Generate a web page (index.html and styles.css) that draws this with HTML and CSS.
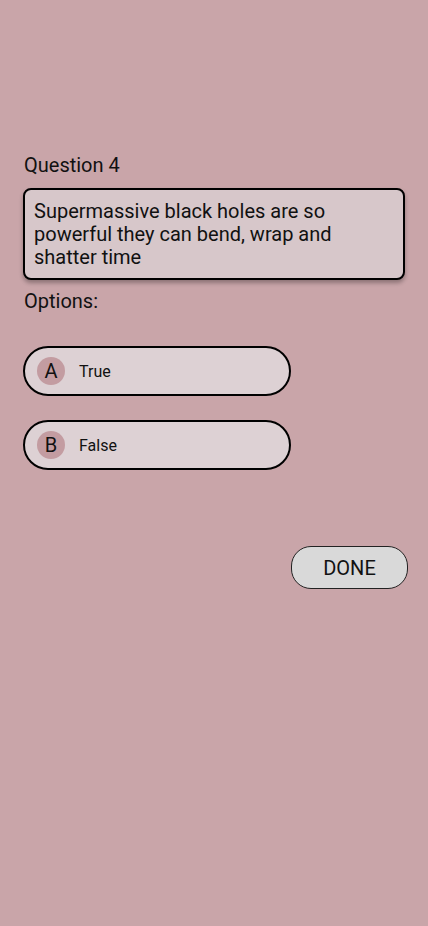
FILE: index.html
```html
<!DOCTYPE html>
<html>
<head>
<meta charset="utf-8">
<link rel="stylesheet" href="styles.css">
</head>
<body>
<main class="page">
  <div class="q-label">Question 4</div>
  <div class="q-box">Supermassive black holes are so powerful they can bend, wrap and shatter time</div>
  <div class="opt-label">Options:</div>
  <div class="options">
    <div class="option"><span class="badge">A</span><span class="opt-text">True</span></div>
    <div class="option"><span class="badge">B</span><span class="opt-text">False</span></div>
  </div>
  <div class="actions"><button class="done">DONE</button></div>
</main>
</body>
</html>
```
FILE: styles.css
```css
html, body {
  margin: 0;
  padding: 0;
  background: #c9a5a9;
  height: 100%;
}
body {
  font-family: Roboto, "Noto Sans", sans-serif;
  color: #111;
}
.page {
  padding: 154px 20px 0 23px;
  display: flex;
  flex-direction: column;
}
.q-label {
  font-size: 20px;
  line-height: 22px;
  padding-left: 1px;
}
.q-box {
  margin-top: 12px;
  width: 382px;
  box-sizing: border-box;
  border: 2px solid #000;
  border-radius: 8px;
  background: #d7c7ca;
  padding: 10px 9px 9px 9px;
  font-size: 20px;
  line-height: 23px;
  box-shadow: 0 3px 4px rgba(0,0,0,0.3);
}
.opt-label {
  margin-top: 10px;
  font-size: 20px;
  line-height: 22px;
  padding-left: 1px;
}
.options {
  margin-top: 34px;
  display: flex;
  flex-direction: column;
  gap: 24px;
}
.option {
  width: 268px;
  height: 50px;
  box-sizing: border-box;
  border: 2px solid #000;
  border-radius: 25px;
  background: #ddd1d4;
  display: flex;
  align-items: center;
  padding-left: 12px;
}
.badge {
  width: 28px;
  height: 28px;
  border-radius: 50%;
  background: #c39ca1;
  display: flex;
  align-items: center;
  justify-content: center;
  font-size: 20px;
}
.opt-text {
  margin-left: 14px;
  font-size: 16px;
}
.actions {
  margin-top: 76px;
  display: flex;
  justify-content: flex-end;
}
.done {
  width: 117px;
  height: 43px;
  border: 1px solid #222;
  border-radius: 20px;
  background: #d9d9d9;
  font-family: Roboto, sans-serif;
  font-size: 20px;
  color: #111;
  padding: 0;
}
```
